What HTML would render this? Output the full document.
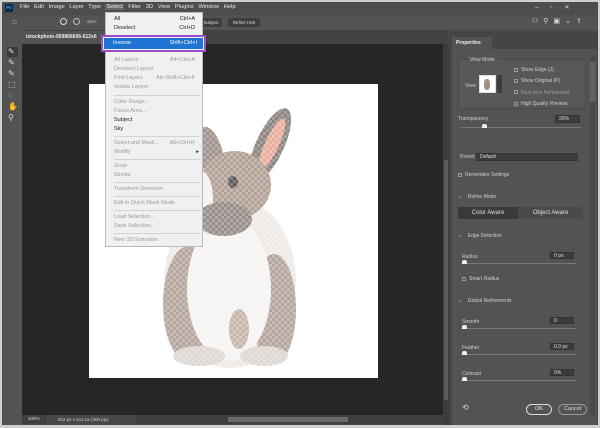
<!DOCTYPE html>
<html><head><meta charset="utf-8"><style>
*{margin:0;padding:0;box-sizing:border-box}
body{width:600px;height:428px;background:#cfcfcf;position:relative;overflow:hidden;font-family:"Liberation Sans",sans-serif;font-size:5.5px;color:#ddd}
.a{position:absolute}
.menu div{position:absolute;left:8px;white-space:nowrap}
.menu .k{left:auto;right:7px}
.g{color:#9a9a9a}
.sep{position:absolute;left:2px;right:2px;height:1px;background:#d3d3d3}
.lbl{color:#cfcfcf;font-size:5px}
.box{position:absolute;background:#3c3c3c;border:1px solid #333;color:#ddd;font-size:5px;padding-left:3px;line-height:7px}
.sl{position:absolute;height:1px;background:#777}
.th{position:absolute;width:5px;height:4px;background:#eee;border-radius:2px 2px 0 0}
.cb{display:inline-block;width:4px;height:4px;border:1px solid #999;margin-right:3px;vertical-align:middle}
</style></head><body>
<div class="a" style="left:2px;top:2px;width:596px;height:423px;background:#4a4a4a"></div>
<div class="a" style="left:2px;top:2px;width:596px;height:13px;background:#4d4d4d"></div>
<div class="a" style="left:5px;top:4px;width:8px;height:8px;background:#0c2a4a;color:#3da0ff;font-size:4.5px;font-weight:bold;line-height:8px;text-align:center">Ps</div>
<div class="a" style="left:20px;top:4px;color:#e6e6e6;font-size:5.8px;word-spacing:3px;white-space:nowrap">File Edit Image Layer Type <span style="background:#666;padding:0 1px">Select</span> Filter 3D View Plugins Window Help</div>
<div class="a" style="left:535px;top:4px;color:#ddd;font-size:6px;letter-spacing:12px">–▫✕</div>
<div class="a" style="left:2px;top:15px;width:596px;height:15px;background:#535353"></div>
<div class="a" style="left:12px;top:17px;color:#bbb;font-size:8px">⌂</div>
<div class="a" style="left:60px;top:18px;width:7px;height:7px;border:1px solid #ddd;border-radius:50%"></div>
<div class="a" style="left:73px;top:18px;width:7px;height:7px;border:1px solid #bbb;border-radius:50%"></div>
<div class="a" style="left:87px;top:19px;color:#ccc;font-size:4.5px">Size:</div>
<div class="a" style="left:200px;top:18px;width:22px;height:9px;background:#3d3d3d;color:#ddd;font-size:4.5px;line-height:9px;text-align:center">Subject</div>
<div class="a" style="left:228px;top:18px;width:32px;height:9px;background:#3d3d3d;color:#ddd;font-size:4.5px;line-height:9px;text-align:center">Refine Hair</div>
<div class="a" style="left:532px;top:17px;color:#ddd;font-size:7px;letter-spacing:5px">⚇⚲▣⌄⇪</div>
<div class="a" style="left:22px;top:30px;width:426px;height:14px;background:#424242"></div>
<div class="a" style="left:22px;top:31px;width:85px;height:13px;background:#535353;color:#eee;font-size:5px;font-weight:bold;line-height:13px;padding-left:4px;white-space:nowrap;overflow:hidden">istockphoto-959866606-612x6</div>
<div class="a" style="left:2px;top:30px;width:20px;height:395px;background:#535353"></div>
<div class="a" style="left:7px;top:47px;width:11px;height:10px;background:#3a3a3a"></div>
<div class="a" style="left:8px;top:46px;color:#ddd;font-size:8px;line-height:11px">✎<br>✎<br>✎<br>⬚<br>◌<br>✋<br>⚲</div>
<div class="a" style="left:22px;top:44px;width:421px;height:371px;background:#262626"></div>
<div class="a" style="left:89px;top:84px;width:289px;height:294px;background:#fff"></div>
<svg class="a" style="left:89px;top:84px" width="289" height="294" viewBox="0 0 289 294">
<defs><pattern id="ck" width="6" height="6" patternUnits="userSpaceOnUse"><rect width="3" height="3" fill="#fff" opacity=".25"/><rect x="3" y="3" width="3" height="3" fill="#fff" opacity=".25"/></pattern></defs>
<g opacity=".8">
<ellipse cx="122" cy="70" rx="12" ry="28" transform="rotate(-15 122 70)" fill="#8a7a72"/>
<ellipse cx="181" cy="61" rx="14" ry="40" transform="rotate(25 181 61)" fill="#6f6663"/>
<ellipse cx="183" cy="60" rx="7" ry="28" transform="rotate(25 183 60)" fill="#e49a86"/>
<ellipse cx="141" cy="198" rx="66" ry="86" fill="#ece6e1"/>
<ellipse cx="100" cy="220" rx="26" ry="58" fill="#a59185"/>
<ellipse cx="185" cy="225" rx="22" ry="55" fill="#a59185"/>
<ellipse cx="140" cy="205" rx="42" ry="72" fill="#f5f2ef"/>
<ellipse cx="146" cy="101" rx="36" ry="34" fill="#a08a7c"/>
<ellipse cx="112" cy="115" rx="12" ry="28" fill="#f3efeb"/>
<ellipse cx="135" cy="135" rx="28" ry="17" fill="#7f746e"/>
<ellipse cx="144" cy="98" rx="5" ry="6" fill="#333"/>
<ellipse cx="150" cy="245" rx="10" ry="20" fill="#b8a598"/>
<ellipse cx="110" cy="272" rx="26" ry="10" fill="#d6cec8"/>
<ellipse cx="175" cy="272" rx="24" ry="10" fill="#d6cec8"/>
</g>
<rect width="289" height="294" fill="url(#ck)"/>
</svg>
<div class="a" style="left:22px;top:415px;width:421px;height:9px;background:#3f3f3f"></div>
<div class="a" style="left:28px;top:416px;color:#ddd;font-size:4.5px">100%</div>
<div class="a" style="left:46px;top:415px;width:90px;height:9px;background:#474747;color:#ccc;font-size:4.5px;line-height:9px;padding-left:12px">603 px x 612 px (300 ppi)</div>
<div class="a" style="left:228px;top:417px;width:120px;height:5px;background:#6a6a6a"></div>
<div class="a" style="left:443px;top:44px;width:6px;height:381px;background:#3c3c3c"></div>
<div class="a" style="left:444px;top:160px;width:4px;height:240px;background:#5a5a5a"></div>
<div class="a" style="left:449px;top:32px;width:149px;height:393px;background:#454545"></div>
<div class="a" style="left:452px;top:37px;width:40px;height:12px;background:#535353;color:#eee;font-size:5px;font-weight:bold;line-height:12px;padding-left:4px">Properties</div>
<div class="a" style="left:452px;top:49px;width:145px;height:376px;background:#535353"></div>
<div class="a" style="left:590px;top:56px;width:5px;height:360px;background:#4a4a4a"></div>
<div class="a" style="left:590px;top:62px;width:5px;height:40px;background:#626262"></div>
<div class="a" style="left:458px;top:59px;width:128px;height:50px;border:1px solid #4a4a4a;background:#585858"></div>
<div class="a lbl" style="left:468px;top:57px;background:#585858;padding:0 2px">View Mode</div>
<div class="a lbl" style="left:465px;top:83px">View</div>
<div class="a" style="left:479px;top:75px;width:17px;height:18px;background:#fff;border:1px solid #ddd"></div>
<div class="a" style="left:484px;top:79px;width:6px;height:11px;background:#a08e82;border-radius:40%"></div>
<div class="a" style="left:497px;top:75px;width:5px;height:18px;background:#3c3c3c"></div>
<div class="a lbl" style="left:514px;top:65px;line-height:11.3px"><span class="cb"></span>Show Edge (J)<br><span class="cb"></span>Show Original (P)<br><span class="g"><span class="cb"></span>Real-time Refinement</span><br><span class="cb"></span>High Quality Preview</div>
<div class="a lbl" style="left:458px;top:116px">Transparency</div>
<div class="box" style="left:555px;top:115px;width:25px;height:8px">20%</div>
<div class="sl" style="left:461px;top:127px;width:120px"></div>
<div class="th" style="left:482px;top:124px"></div>
<div class="a lbl" style="left:460px;top:154px">Preset</div>
<div class="box" style="left:476px;top:153px;width:102px;height:8px">Default</div>
<div class="a lbl" style="left:458px;top:172px"><span class="cb"></span>Remember Settings</div>
<div class="a lbl" style="left:458px;top:194px">⌄&nbsp;&nbsp;&nbsp;&nbsp;Refine Mode</div>
<div class="a" style="left:458px;top:207px;width:60px;height:12px;background:#3a3a3a;color:#ddd;font-size:6px;line-height:12px;text-align:center">Color Aware</div>
<div class="a" style="left:518px;top:207px;width:65px;height:12px;background:#4a4a4a;color:#ddd;font-size:6px;line-height:12px;text-align:center">Object Aware</div>
<div class="a lbl" style="left:458px;top:233px">⌄&nbsp;&nbsp;&nbsp;&nbsp;Edge Detection</div>
<div class="a lbl" style="left:462px;top:254px">Radius</div>
<div class="box" style="left:550px;top:252px;width:24px;height:7px">0 px</div>
<div class="sl" style="left:461px;top:263px;width:115px"></div><div class="th" style="left:462px;top:260px"></div>
<div class="a lbl" style="left:462px;top:276px"><span class="cb"></span>Smart Radius</div>
<div class="a lbl" style="left:458px;top:298px">⌄&nbsp;&nbsp;&nbsp;&nbsp;Global Refinements</div>
<div class="a lbl" style="left:462px;top:319px">Smooth</div>
<div class="box" style="left:550px;top:317px;width:24px;height:7px">0</div>
<div class="sl" style="left:461px;top:328px;width:115px"></div><div class="th" style="left:462px;top:325px"></div>
<div class="a lbl" style="left:462px;top:345px">Feather</div>
<div class="box" style="left:550px;top:343px;width:24px;height:7px">0.0 px</div>
<div class="sl" style="left:461px;top:354px;width:115px"></div><div class="th" style="left:462px;top:351px"></div>
<div class="a lbl" style="left:462px;top:371px">Contrast</div>
<div class="box" style="left:550px;top:369px;width:24px;height:7px">0%</div>
<div class="sl" style="left:461px;top:380px;width:115px"></div><div class="th" style="left:462px;top:377px"></div>
<div class="a" style="left:462px;top:403px;color:#ddd;font-size:8px">⟲</div>
<div class="a" style="left:526px;top:404px;width:26px;height:11px;border:1px solid #ddd;border-radius:6px;color:#eee;font-size:5.5px;line-height:9px;text-align:center">OK</div>
<div class="a" style="left:558px;top:404px;width:29px;height:11px;border:1px solid #999;border-radius:6px;color:#ddd;font-size:5.5px;line-height:9px;text-align:center">Cancel</div>
<div class="a menu" style="left:105px;top:12px;width:98px;height:235px;background:#f0f0f0;border:1px solid #bbb;color:#222;font-size:5.5px">
<div style="top:3px">All</div><div class="k" style="top:3px">Ctrl+A</div>
<div style="top:12px">Deselect</div><div class="k" style="top:12px">Ctrl+D</div>
<div class="g" style="top:44px">All Layers</div><div class="k g" style="top:44px">Alt+Ctrl+A</div>
<div class="g" style="top:53px">Deselect Layers</div>
<div class="g" style="top:62px">Find Layers</div><div class="k g" style="top:62px">Alt+Shift+Ctrl+F</div>
<div class="g" style="top:71px">Isolate Layers</div>
<div class="sep" style="top:82px"></div>
<div class="g" style="top:86px">Color Range...</div>
<div class="g" style="top:95px">Focus Area...</div>
<div style="top:104px">Subject</div>
<div style="top:113px">Sky</div>
<div class="sep" style="top:123px"></div>
<div class="g" style="top:127px">Select and Mask...</div><div class="k g" style="top:127px">Alt+Ctrl+R</div>
<div class="g" style="top:136px">Modify</div><div class="k" style="top:136px;right:3px">▸</div>
<div class="sep" style="top:146px"></div>
<div class="g" style="top:150px">Grow</div>
<div class="g" style="top:159px">Similar</div>
<div class="sep" style="top:169px"></div>
<div class="g" style="top:173px">Transform Selection</div>
<div class="sep" style="top:183px"></div>
<div class="g" style="top:187px">Edit in Quick Mask Mode</div>
<div class="sep" style="top:197px"></div>
<div class="g" style="top:201px">Load Selection...</div>
<div class="g" style="top:210px">Save Selection...</div>
<div class="sep" style="top:220px"></div>
<div class="g" style="top:224px">New 3D Extrusion</div>
</div>
<div class="a" style="left:101px;top:35px;width:105px;height:17px;border:2px solid #9a4fd0;background:#f0f0f0"></div>
<div class="a" style="left:104px;top:38px;width:99px;height:11px;background:#1f73d2;color:#fff;font-size:5.5px;line-height:11px">
<span style="position:absolute;left:9px">Inverse</span><span style="position:absolute;right:6px">Shift+Ctrl+I</span></div>
</body></html>
